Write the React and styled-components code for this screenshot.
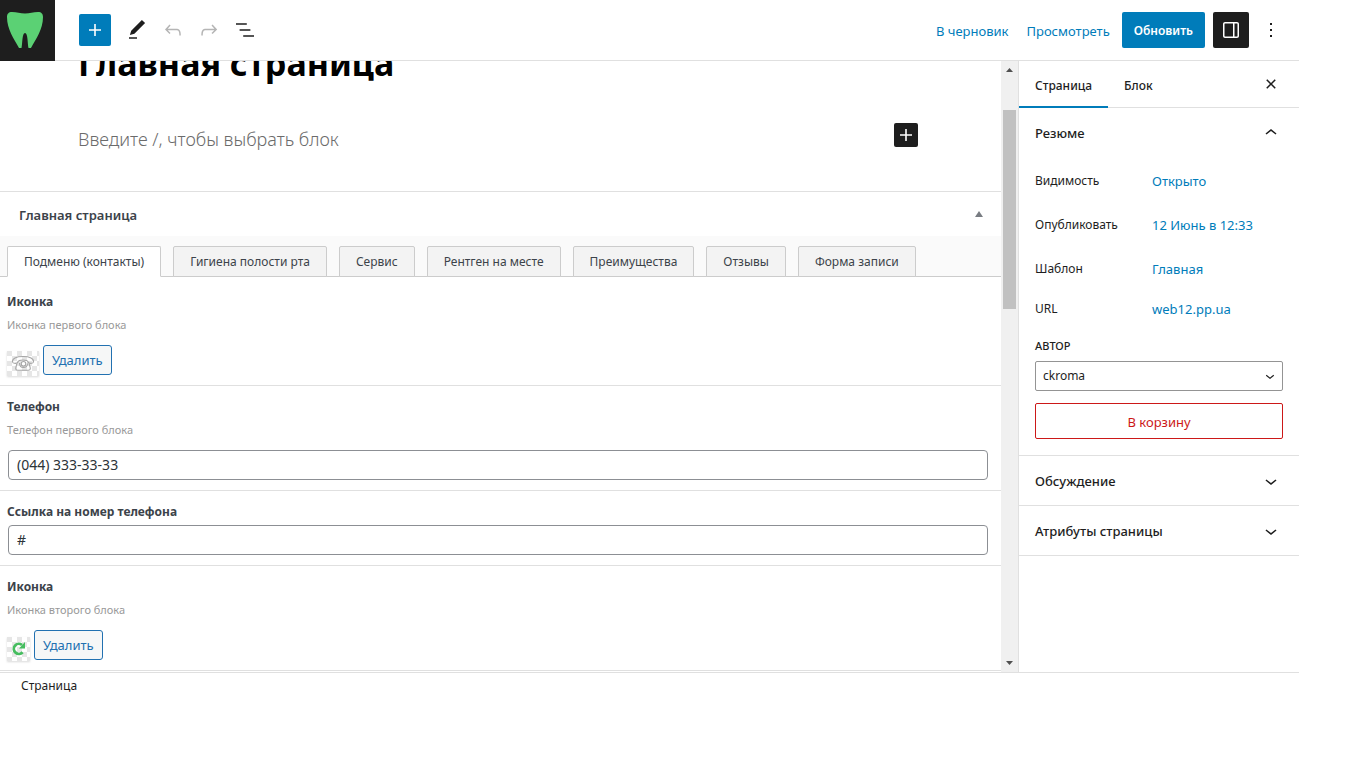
import React from "react";
import styled, { createGlobalStyle } from "styled-components";

const Global = createGlobalStyle`
  *, *::before, *::after { box-sizing: border-box; }
  body {
    margin: 0;
    padding-right: 67px;
    background: #fff;
    color: #1e1e1e;
    font: 13px/20px "Noto Sans", "Open Sans", sans-serif;
  }
  button, input, select { font: inherit; color: inherit; }
  button { cursor: pointer; }
  a { color: #007cba; text-decoration: none; }
`;

const Glyph = styled.svg`
  display: block;
  flex: none;
  fill: currentColor;
`;

const PATHS = {
  plus: "M18 11.2h-5.2V6h-1.6v5.2H6v1.6h5.2V18h1.6v-5.2H18z",
  edit: "M20.1 5.1L16.9 2 6.2 12.7l-1.3 4.4 4.5-1.3L20.1 5.1zM4 20.8h8v-1.5H4v1.5z",
  undo: "M18.3 11.7c-.6-.6-1.4-.9-2.3-.9H6.7l2.9-3.3-1.1-1-4.5 5L8.5 16l1-1-2.7-2.7H16c.5 0 .9.2 1.3.5 1 1 1 3.4 1 4.5v.3h1.5v-.2c0-1.5 0-4.3-1.5-5.7z",
  redo: "M15.6 6.5l-1.1 1 2.9 3.3H8c-.9 0-1.7.3-2.3.9-1.4 1.5-1.4 4.2-1.4 5.6v.2h1.5v-.3c0-1.1 0-3.5 1-4.5.3-.3.7-.5 1.3-.5h9.2L14.5 15l1.1 1.1 4.6-4.6-4.6-5z",
  list: "M13.8 5.2H3v1.5h10.8V5.2zm-3.6 12v1.5H21v-1.5H10.2zm7.2-6H6.6v1.5h10.8v-1.5z",
  drawer: "M18 4H6c-1.1 0-2 .9-2 2v12c0 1.1.9 2 2 2h12c1.1 0 2-.9 2-2V6c0-1.1-.9-2-2-2zm-4 14.5H6c-.3 0-.5-.2-.5-.5V6c0-.3.2-.5.5-.5h8v13zm4.5-.5c0 .3-.2.5-.5.5h-2.5v-13H18c.3 0 .5.2.5.5v12z",
  more: "M13 19h-2v-2h2v2zm0-6h-2v-2h2v2zm0-6h-2V5h2v2z",
  close: "M12 13.06l3.712 3.713 1.061-1.06L13.061 12l3.712-3.712-1.06-1.06L12 10.938 8.288 7.227l-1.061 1.06L10.939 12l-3.712 3.712 1.06 1.061L12 13.061z",
  up: "M6.5 12.4L12 8l5.5 4.4-.9 1.2L12 10l-4.5 3.6-1-1.2z",
  down: "M17.5 11.6L12 16l-5.5-4.4.9-1.2L12 14l4.5-3.6 1 1.2z",
};

const Icon = ({ name, size = 24 }) => (
  <Glyph width={size} height={size} viewBox="0 0 24 24" aria-hidden="true">
    <path d={PATHS[name]} />
  </Glyph>
);

/* Top bar */
const TopBar = styled.header`
  display: flex;
  align-items: center;
  height: 61px;
  padding-right: 6px;
  border-bottom: 1px solid #e0e0e0;
`;
const SiteLogo = styled.a`
  flex: none;
  display: block;
  width: 55px;
  height: 61px;
  background: #1e1e1e;
`;
const Tools = styled.div`
  display: flex;
  align-items: center;
  gap: 12px;
  margin-left: 24px;
`;
const IconButton = styled.button`
  display: flex;
  align-items: center;
  justify-content: center;
  flex: none;
  width: ${(p) => p.$size || 24}px;
  height: ${(p) => p.$size || 24}px;
  padding: 0;
  border: 0;
  border-radius: 2px;
  background: ${(p) => p.$bg || "transparent"};
  color: ${(p) => (p.$bg ? "#fff" : "#1e1e1e")};
  &:disabled { color: #b5b5b5; }
`;
const InsertButton = styled(IconButton)`
  margin-right: 2px;
`;
const Actions = styled.div`
  display: flex;
  align-items: center;
  margin-left: auto;
`;
const TextButton = styled.button`
  margin-right: 18px;
  padding: 2px 0 0;
  border: 0;
  background: none;
  color: #007cba;
`;
const ViewLink = styled.a`
  margin-right: 12px;
  padding-top: 2px;
`;
const UpdateButton = styled.button`
  height: 36px;
  margin-right: 8px;
  padding: 2px 12px 0;
  border: 0;
  border-radius: 2px;
  background: #007cba;
  color: #fff;
  font-size: 12px;
  font-weight: 600;
`;

/* Work area */
const Workspace = styled.div`
  display: flex;
  border-bottom: 1px solid #e0e0e0;
`;
const Canvas = styled.main`
  flex: 1;
  min-width: 0;
  overflow: hidden;
  padding-bottom: 1px;
`;
const PostTitle = styled.h1`
  margin: -20px 0 0 78px;
  font-size: 34px;
  line-height: 44px;
  font-weight: 700;
  color: #000;
`;
const EmptyBlock = styled.div`
  display: flex;
  align-items: flex-start;
  justify-content: space-between;
  height: 24px;
  margin: 38px 83px 44px 78px;
  color: #6b6b6b;
  font-size: 18px;
  line-height: 32px;
  font-weight: 300;
`;

const MetaBox = styled.section`
  border-top: 1px solid #e0e0e0;
  color: #3c434a;
`;
const MetaHead = styled.div`
  display: flex;
  align-items: center;
  justify-content: space-between;
  height: 44px;
  padding: 2px 16px 0 19px;
`;
const MetaTitle = styled.h2`
  margin: 0;
  font-size: 13px;
  font-weight: 600;
`;
const ToggleButton = styled.button`
  padding: 0;
  width: 12px;
  height: 12px;
  border: 0;
  background: none;
  color: #787c82;
`;
const TabStrip = styled.div`
  display: flex;
  gap: 12px;
  padding: 10px 7px 0;
  background: #fafafa;
  box-shadow: inset 0 -1px #ccc;
`;
const Tab = styled.button`
  height: 31px;
  padding: 0 16px;
  white-space: nowrap;
  border: 1px solid #ccc;
  border-bottom-color: ${(p) => (p.$active ? "#fff" : "#ccc")};
  border-radius: 2px 2px 0 0;
  background: ${(p) => (p.$active ? "#fff" : "#f3f3f3")};
  font-size: 12px;
`;
const Fields = styled.div`
  padding-top: 4px;
`;
const FieldRow = styled.div`
  padding: 10px 13px 10px 7px;
  border-bottom: 1px solid #e0e0e0;
`;
const FieldLabel = styled.label`
  display: block;
  margin-bottom: 2px;
  font-size: 12px;
  line-height: 22px;
  font-weight: 700;
`;
const FieldHint = styled.p`
  margin: 0 0 10px;
  color: #999;
  font-size: 11px;
`;
const FieldInput = styled.input`
  display: block;
  width: calc(100% - 1px);
  height: 30px;
  margin-left: 1px;
  padding: 0 8px 2px;
  border: 1px solid #8c8f94;
  border-radius: 4px;
  background: #fff;
  color: #2c3338;
  font-size: 14px;
`;
const MediaLine = styled.div`
  display: flex;
  align-items: flex-end;
  gap: 4px;
  height: 30px;
`;
const Thumb = styled.svg`
  display: block;
  flex: none;
  margin-bottom: -1px;
  box-shadow: 0 1px 2px rgba(0, 0, 0, 0.15);
`;
const DeleteButton = styled.button`
  height: 30px;
  padding: 0 8px;
  border: 1px solid #2271b1;
  border-radius: 3px;
  background: #f6f7f7;
  color: #2271b1;
`;

const ScrollTrack = styled.div`
  flex: none;
  display: flex;
  flex-direction: column;
  align-items: center;
  width: 17px;
  background: #f0f0f0;
  color: #505050;
`;
const ScrollEnd = styled.svg`
  flex: none;
  width: 17px;
  height: 17px;
  fill: currentColor;
`;
const ScrollGroove = styled.div`
  flex: 1;
  width: 13px;
  padding-top: 32px;
`;
const ScrollThumb = styled.div`
  height: 199px;
  background: #c1c1c1;
`;

/* Settings sidebar */
const Sidebar = styled.aside`
  flex: none;
  width: 281px;
  border-left: 1px solid #e0e0e0;
`;
const SideTabs = styled.div`
  display: flex;
  align-items: stretch;
  height: 47px;
  padding-right: 16px;
  box-shadow: inset 0 -1px #e0e0e0;
`;
const SideTab = styled.button`
  padding: 2px 16px 0;
  border: 0;
  background: none;
  font-size: 12px;
  font-weight: 500;
  box-shadow: ${(p) => (p.$active ? "inset 0 -2px #007cba" : "none")};
`;
const SideClose = styled(IconButton)`
  margin: 11px 0 0 auto;
`;
const Panel = styled.section`
  border-bottom: 1px solid #e0e0e0;
`;
const PanelToggle = styled.button`
  display: flex;
  align-items: center;
  justify-content: space-between;
  width: 100%;
  height: 49px;
  padding: 0 16px;
  border: 0;
  background: none;
  font-weight: 500;
  text-align: left;
`;
const PanelBody = styled.div`
  padding: 6px 16px 16px;
`;
const SummaryRow = styled.div`
  display: grid;
  grid-template-columns: 117px 1fr;
  align-items: center;
  height: 36px;
  margin-bottom: 8px;
  &:last-of-type { height: 28px; margin-bottom: 0; }
`;
const SummaryName = styled.span`
  font-size: 12px;
`;
const SelectLabel = styled.label`
  display: block;
  margin: 13px 0 5px;
  font-size: 11px;
  font-weight: 500;
  text-transform: uppercase;
`;
const SelectWrap = styled.div`
  position: relative;
  svg {
    position: absolute;
    right: 4px;
    top: 6px;
    pointer-events: none;
  }
`;
const Select = styled.select`
  display: block;
  width: 100%;
  height: 30px;
  padding: 0 7px;
  appearance: none;
  border: 1px solid #949494;
  border-radius: 2px;
  background: #fff;
  font-size: 12px;
`;
const TrashButton = styled.button`
  width: 100%;
  height: 36px;
  margin-top: 12px;
  padding: 2px 0 0;
  border: 1px solid #cc1818;
  border-radius: 2px;
  background: #fff;
  color: #cc1818;
`;
const Footer = styled.footer`
  padding: 3px 21px;
  font-size: 12px;
`;

const Checker = ({ id }) => (
  <pattern id={id} width="10" height="10" patternUnits="userSpaceOnUse">
    <rect width="10" height="10" fill="#fff" />
    <path d="M0 0h5v5H0zM5 5h5v5H5z" fill="#e6e6e6" />
  </pattern>
);

const PhoneThumb = () => (
  <Thumb width="32" height="25" viewBox="0 0 32 25" role="img" aria-label="Телефон">
    <defs><Checker id="check-a" /></defs>
    <rect width="32" height="25" fill="url(#check-a)" />
    <g fill="none" stroke="#a6a6a6" strokeWidth="1.1">
      <path d="M5.500 11C5 7.500 9 5.500 16 5.500s11 2 10.500 5.500c-.3 1.800-5 1.800-5.500 0-.3-1.700-2-2-5-2s-4.700.3-5 2c-.5 1.800-5.200 1.800-5.500 0z" />
      <path d="M10 12.500c-.5 2-1.500 3.500-1.300 5.500.2 1 1 1.200 2 1.200h10.600c1 0 1.800-.2 2-1.200.2-2-.8-3.500-1.300-5.500" />
      <circle cx="16.500" cy="12.800" r="2.300" />
      <path d="M12.500 12c0 6 8 6 8 .5" />
    </g>
  </Thumb>
);

const RefreshThumb = () => (
  <Thumb width="23" height="24" viewBox="0 0 23 24" role="img" aria-label="Обновление">
    <defs><Checker id="check-b" /></defs>
    <rect width="23" height="24" fill="url(#check-b)" />
    <path d="M15.600 15.200a5 5 0 1 1-.6-7.200" fill="none" stroke="#46bd5f" strokeWidth="2.800" />
    <path d="M18 5v6.500h-6z" fill="#46bd5f" />
  </Thumb>
);

const TABS = ["Подменю (контакты)", "Гигиена полости рта", "Сервис", "Рентген на месте", "Преимущества", "Отзывы", "Форма записи"];
const SUMMARY = [
  ["Видимость", "Открыто"],
  ["Опубликовать", "12 Июнь в 12:33"],
  ["Шаблон", "Главная"],
  ["URL", "web12.pp.ua"],
];
const FIELDS = [
  { id: "icon-1", label: "Иконка", hint: "Иконка первого блока", Thumb: PhoneThumb },
  { id: "phone", label: "Телефон", hint: "Телефон первого блока", value: "(044) 333-33-33" },
  { id: "phone-link", label: "Ссылка на номер телефона", value: "#" },
  { id: "icon-2", label: "Иконка", hint: "Иконка второго блока", Thumb: RefreshThumb },
];

const Field = ({ id, label, hint, value, Thumb: Preview }) => (
  <FieldRow>
    <FieldLabel htmlFor={id}>{label}</FieldLabel>
    {hint && <FieldHint>{hint}</FieldHint>}
    {Preview ? (
      <MediaLine>
        <Preview />
        <DeleteButton id={id} type="button">Удалить</DeleteButton>
      </MediaLine>
    ) : (
      <FieldInput id={id} type="text" defaultValue={value} />
    )}
  </FieldRow>
);

export default function App() {
  return (
    <>
      <Global />
      <TopBar>
        <SiteLogo href="#" aria-label="К списку страниц">
          <Glyph width="55" height="61" viewBox="0 0 55 61" aria-hidden="true">
            <path fill="#5bd174" d="M7 17c0-3 1.500-5 5-5 5 0 8 1.500 13 1.500S33 12 38 12c3.500 0 5 2 5 5 0 12-7 22-12 31h-2.500c-1-4-.5-15-3.500-15s-2.500 11-3.500 15H19C14 39 7 29 7 17z" />
          </Glyph>
        </SiteLogo>
        <Tools>
          <InsertButton $size={32} $bg="#007cba" aria-label="Добавить блок"><Icon name="plus" /></InsertButton>
          <IconButton aria-label="Инструменты"><Icon name="edit" /></IconButton>
          <IconButton disabled aria-label="Отменить"><Icon name="undo" /></IconButton>
          <IconButton disabled aria-label="Повторить"><Icon name="redo" /></IconButton>
          <IconButton aria-label="Список"><Icon name="list" /></IconButton>
        </Tools>
        <Actions>
          <TextButton type="button">В черновик</TextButton>
          <ViewLink href="#">Просмотреть</ViewLink>
          <UpdateButton type="button">Обновить</UpdateButton>
          <IconButton $size={36} $bg="#1e1e1e" aria-label="Настройки"><Icon name="drawer" /></IconButton>
          <IconButton $size={44} aria-label="Параметры"><Icon name="more" /></IconButton>
        </Actions>
      </TopBar>

      <Workspace>
        <Canvas>
          <PostTitle>Главная страница</PostTitle>
          <EmptyBlock>
            <span>Введите /, чтобы выбрать блок</span>
            <IconButton $bg="#1e1e1e" aria-label="Добавить блок"><Icon name="plus" /></IconButton>
          </EmptyBlock>
          <MetaBox>
            <MetaHead>
              <MetaTitle>Главная страница</MetaTitle>
              <ToggleButton type="button" aria-label="Свернуть">
                <Glyph width="12" height="12" viewBox="0 0 12 12"><path d="M6 2l4 6H2z" /></Glyph>
              </ToggleButton>
            </MetaHead>
            <TabStrip role="tablist">
              {TABS.map((t, i) => (
                <Tab key={t} role="tab" aria-selected={i === 0} $active={i === 0}>{t}</Tab>
              ))}
            </TabStrip>
            <Fields>
              {FIELDS.map((f) => <Field key={f.id} {...f} />)}
            </Fields>
          </MetaBox>
        </Canvas>
        <ScrollTrack aria-hidden="true">
          <ScrollEnd viewBox="0 0 17 17"><path d="M5 11l3.500-4 3.500 4z" /></ScrollEnd>
          <ScrollGroove><ScrollThumb /></ScrollGroove>
          <ScrollEnd viewBox="0 0 17 17"><path d="M5 6h7l-3.500 4z" /></ScrollEnd>
        </ScrollTrack>
        <Sidebar>
          <SideTabs role="tablist">
            <SideTab role="tab" aria-selected="true" $active>Страница</SideTab>
            <SideTab role="tab" aria-selected="false">Блок</SideTab>
            <SideClose aria-label="Закрыть"><Icon name="close" /></SideClose>
          </SideTabs>
          <Panel>
            <PanelToggle aria-expanded="true">Резюме<Icon name="up" /></PanelToggle>
            <PanelBody>
              <div>
                {SUMMARY.map(([name, value]) => (
                  <SummaryRow key={name}><SummaryName>{name}</SummaryName><a href="#">{value}</a></SummaryRow>
                ))}
              </div>
              <SelectLabel htmlFor="author">Автор</SelectLabel>
              <SelectWrap>
                <Select id="author" defaultValue="ckroma"><option>ckroma</option></Select>
                <Icon name="down" size={18} />
              </SelectWrap>
              <TrashButton type="button">В корзину</TrashButton>
            </PanelBody>
          </Panel>
          <Panel><PanelToggle aria-expanded="false">Обсуждение<Icon name="down" /></PanelToggle></Panel>
          <Panel><PanelToggle aria-expanded="false">Атрибуты страницы<Icon name="down" /></PanelToggle></Panel>
        </Sidebar>
      </Workspace>
      <Footer>Страница</Footer>
    </>
  );
}
